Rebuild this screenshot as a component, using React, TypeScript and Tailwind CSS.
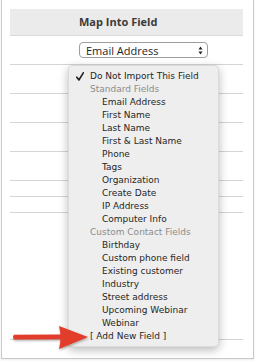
import { ReactNode } from 'react'

type Item = { label: string; kind: 'top' | 'group' | 'field'; checked?: boolean }

const items: Item[] = [
  { label: 'Do Not Import This Field', kind: 'top', checked: true },
  { label: 'Standard Fields', kind: 'group' },
  { label: 'Email Address', kind: 'field' },
  { label: 'First Name', kind: 'field' },
  { label: 'Last Name', kind: 'field' },
  { label: 'First & Last Name', kind: 'field' },
  { label: 'Phone', kind: 'field' },
  { label: 'Tags', kind: 'field' },
  { label: 'Organization', kind: 'field' },
  { label: 'Create Date', kind: 'field' },
  { label: 'IP Address', kind: 'field' },
  { label: 'Computer Info', kind: 'field' },
  { label: 'Custom Contact Fields', kind: 'group' },
  { label: 'Birthday', kind: 'field' },
  { label: 'Custom phone field', kind: 'field' },
  { label: 'Existing customer', kind: 'field' },
  { label: 'Industry', kind: 'field' },
  { label: 'Street address', kind: 'field' },
  { label: 'Upcoming Webinar', kind: 'field' },
  { label: 'Webinar', kind: 'field' },
  { label: '[ Add New Field ]', kind: 'top' },
]

function Row({ h, children }: { h: string; children?: ReactNode }) {
  return <div className={`${h} border-b border-[#d4d4d4]`}>{children}</div>
}

function MenuItem({ item }: { item: Item }) {
  const pad = item.kind === 'field' ? 'pl-[33px]' : 'pl-[21px]'
  const color = item.kind === 'group' ? 'text-[#8c8c8c]' : 'text-[#262626]'
  return (
    <div className={`relative h-[13px] leading-[13px] whitespace-nowrap ${pad} ${color}`}>
      {item.checked && (
        <svg className="absolute left-[7px] top-[2px]" width="8" height="9" viewBox="0 0 8 9">
          <path d="M0.8 5.2 L2.9 8 L7.3 0.8" fill="none" stroke="#222" strokeWidth="1.6" strokeLinecap="round" strokeLinejoin="round" />
        </svg>
      )}
      {item.label}
    </div>
  )
}

export default function App() {
  return (
    <div className="relative w-[256px] h-[362px] bg-white overflow-hidden">
      {/* Card */}
      <div className="ml-[1px] w-[253px] h-[359px] border-x border-b border-[#c9c9c9] bg-white pt-[9px] pl-[8px] pr-[10px] shadow-[0_1px_2px_rgba(0,0,0,0.08)]">
        {/* Header */}
        <div className="h-[27px] bg-[#ebebeb] border-b border-[#dadada] pl-[69px] flex items-center font-['Open_Sans',sans-serif] font-bold text-[11px] text-[#3a3a3a]">
          Map Into Field
        </div>
        <Row h="h-[29px]">
          <div className="pt-[6px] pl-[69px]">
            <div className="w-[129px] h-[16px] rounded-[4px] border border-[#9d9d9d] bg-white flex items-center justify-between pl-[6px] pr-[4px] font-['Open_Sans',sans-serif] text-[11px] text-[#1e1e1e] leading-none">
              <span>Email Address</span>
              <svg width="5" height="9" viewBox="0 0 5 9">
                <path d="M2.5 0.5 L4.5 3.5 L0.5 3.5 Z" fill="#222" />
                <path d="M2.5 8.5 L4.5 5.5 L0.5 5.5 Z" fill="#222" />
              </svg>
            </div>
          </div>
        </Row>
        <Row h="h-[29px]" />
        <Row h="h-[29px]" />
        <Row h="h-[29px]" />
        <Row h="h-[29px]" />
        <Row h="h-[16px]" />
        <Row h="h-[16px]" />
        <Row h="h-[127px]" />
      </div>

      {/* Open dropdown menu */}
      <div className="absolute left-[68px] top-[65px] w-[151px] h-[282px] rounded-[5px] bg-[#eeeeee] border border-[rgba(0,0,0,0.08)] shadow-[0_3px_10px_rgba(0,0,0,0.28)] pt-[4px] font-['DejaVu_Sans',sans-serif] text-[9px]">
        {items.map((it) => (
          <MenuItem key={it.label} item={it} />
        ))}
      </div>

      {/* Annotation arrow */}
      <svg className="absolute left-[10px] top-[322px]" width="84" height="32" viewBox="0 0 84 32">
        <defs>
          <filter id="sh" x="-10%" y="-30%" width="120%" height="160%">
            <feDropShadow dx="0.5" dy="1.2" stdDeviation="1" floodColor="#000" floodOpacity="0.35" />
          </filter>
        </defs>
        <g filter="url(#sh)">
          <path d="M4 12.8 L52 12.5 L52 17.3 L4 17.4 Q2 15.1 4 12.8 Z" fill="#e23c2c" />
          <path d="M49 4 L78 15 L49 27 Q52 15 49 4 Z" fill="#e23c2c" />
        </g>
      </svg>
    </div>
  )
}
